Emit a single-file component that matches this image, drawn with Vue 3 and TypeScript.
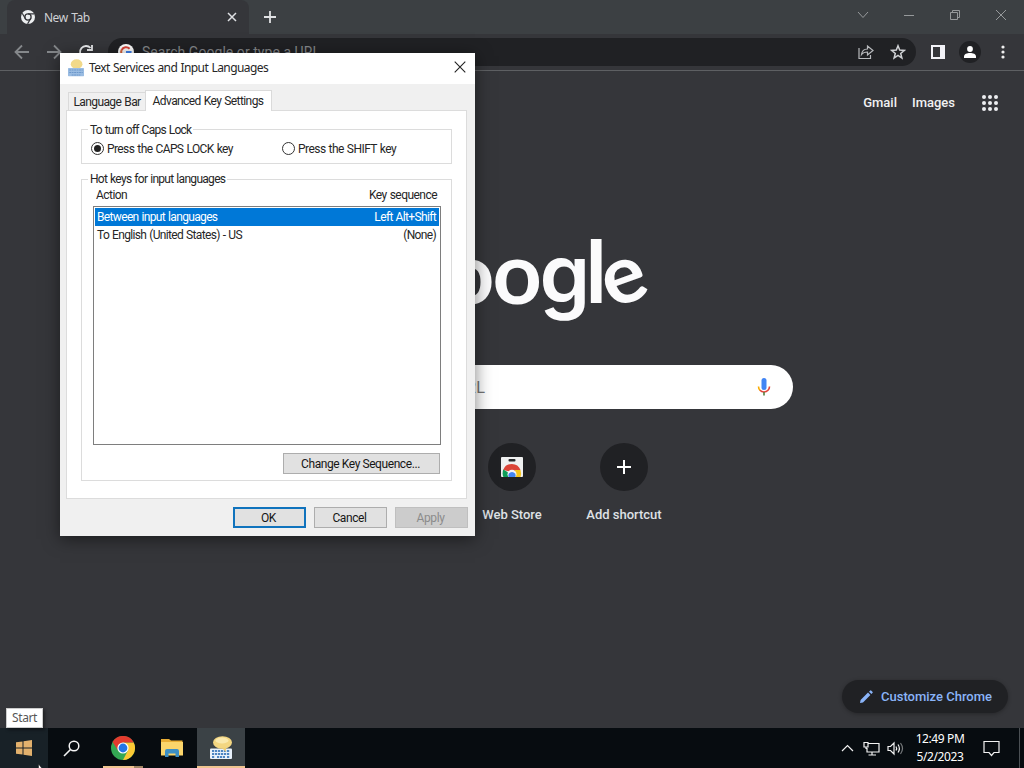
<script setup lang="ts">
import { ref } from 'vue'

interface HotKey {
  action: string
  keys: string
}

const hotKeys: HotKey[] = [
  { action: 'Between input languages', keys: 'Left Alt+Shift' },
  { action: 'To English (United States) - US', keys: '(None)' },
]
const selected = ref(0)
const capsMode = ref<'caps' | 'shift'>('caps')
const dots = [0, 1, 2, 3, 4, 5, 6, 7, 8]
</script>

<template>
  <div class="desktop">
    <div class="browser">
      <header class="tabstrip">
        <div class="tab">
          <svg class="tab-icon" width="14" height="14" viewBox="0 0 14 14">
            <circle cx="7" cy="7" r="7" fill="#eceef0" />
            <circle cx="7" cy="7" r="3.1" fill="none" stroke="#35363a" stroke-width="1.3" />
            <path d="M7 3.9H13.4M4.3 8.5L1.2 3.2M9.7 8.5L6.6 13.9" stroke="#35363a" stroke-width="1.2" />
          </svg>
          <span class="tab-title">New Tab</span>
          <svg class="tab-close" width="10" height="10" viewBox="0 0 10 10"><path d="M1 1l8 8M9 1L1 9" stroke="#dfe1e4" stroke-width="1.5" /></svg>
        </div>
        <svg class="new-tab" width="12" height="12" viewBox="0 0 12 12"><path d="M6 0v12M0 6h12" stroke="#e0e2e4" stroke-width="1.8" /></svg>
        <div class="win-controls">
          <svg width="12" height="12" viewBox="0 0 12 12"><path d="M1 3l5 5.5L11 3" /></svg>
          <svg width="12" height="12" viewBox="0 0 12 12"><path d="M1 6.5h10" /></svg>
          <svg width="12" height="12" viewBox="0 0 12 12"><path d="M1.5 3.5h7v7h-7zM3.5 3.500v-2h7v7h-2" /></svg>
          <svg width="12" height="12" viewBox="0 0 12 12"><path d="M1 1l10 10M11 1L1 11" /></svg>
        </div>
      </header>
      <div class="toolbar">
        <svg class="nav" width="16" height="16" viewBox="0 0 16 16"><path d="M15 8H2M8 1.500L1.500 8L8 14.500" stroke="#85888b" /></svg>
        <svg class="nav" width="16" height="16" viewBox="0 0 16 16"><path d="M1 8h13M8 1.500L14.500 8L8 14.500" stroke="#85888b" /></svg>
        <svg class="nav" width="16" height="16" viewBox="0 0 16 16"><path d="M13.500 10.500A6 6 0 1 1 12.500 4M14 1v5H9" stroke="#eceef0" /></svg>
        <div class="omnibox">
          <svg class="g-icon" width="16" height="16" viewBox="0 0 16 16">
            <circle cx="8" cy="8" r="8" fill="#fff" />
            <path d="M3.700 6A4.800 4.800 0 0 1 11.600 4.700" fill="none" stroke="#d9453a" stroke-width="2" />
            <path d="M3.600 6a4.800 4.800 0 0 0 0 4" fill="none" stroke="#e0653a" stroke-width="2" />
            <path d="M3.700 10a4.800 4.800 0 0 0 7.600 1.500" fill="none" stroke="#34a853" stroke-width="2" />
            <path d="M8 8h4.600a4.800 4.800 0 0 1-1.300 3.500" fill="none" stroke="#4285f4" stroke-width="2" />
          </svg>
          <span class="omni-text">Search Google or type a URL</span>
          <svg class="share" width="16" height="16" viewBox="0 0 16 16"><path d="M1 4v10.500h11.500V11M3.500 10.500C4 6.500 6 5 9.500 5V2L15 6.500L9.500 11V8C7 8 5 8.500 3.500 10.500z" fill="none" stroke="#b8babd" stroke-width="1.2" /></svg>
          <svg width="16" height="16" viewBox="0 0 16 16"><path d="M8 1.800l1.700 4.300 4.600.3-3.600 3 1.200 4.600L8 11.400 4.100 14l1.200-4.600-3.600-3 4.600-.3z" fill="none" stroke="#d0d2d5" stroke-width="1.500" /></svg>
        </div>
        <svg class="side" width="14" height="14" viewBox="0 0 14 14"><path d="M0 0h14v14H0zM2 2v10h7V2z" fill="#f3f3f8" fill-rule="evenodd" /></svg>
        <div class="avatar">
          <svg width="12" height="12" viewBox="0 0 12 12"><circle cx="6" cy="3" r="2.900" fill="#fff" /><path d="M0 12V10.500C0 8 3 7 6 7s6 1 6 3.500V12z" fill="#fff" /></svg>
        </div>
        <svg class="kebab" width="4" height="14" viewBox="0 0 4 14"><circle cx="2" cy="2" r="1.600" /><circle cx="2" cy="7" r="1.600" /><circle cx="2" cy="12" r="1.600" /></svg>
      </div>

      <main class="ntp">
        <nav class="ntp-nav">
          <span class="gmail">Gmail</span>
          <span class="images">Images</span>
          <div class="apps"><i v-for="d in dots" :key="d"></i></div>
        </nav>
        <svg class="wordmark" width="290" height="100" viewBox="370 230 290 100">
          <text y="303.500" x="374">G</text>
          <text y="303.500" x="445">o</text>
          <text y="303.500" x="492.500">o</text>
          <text class="g" y="303" x="539.500">g</text>
          <text y="303" x="585.500">l</text>
          <text class="e" y="302.500" x="603" transform="rotate(-20 625.500 282)">e</text>
        </svg>
        <div class="searchbox">
          <span class="search-text">Search Google or type a URL</span>
          <svg width="14" height="20" viewBox="0 0 14 20">
            <rect x="4.500" y="1" width="5" height="12" rx="2.500" fill="#4285f4" />
            <path d="M1.500 9.500c0 2 .8 3.200 1.700 4" fill="none" stroke="#f9ab00" stroke-width="1.600" />
            <path d="M3 13.300c2 2.200 6 2.200 8 0 .9-.9 1.500-2 1.500-3.800" fill="none" stroke="#e0453a" stroke-width="1.600" />
            <path d="M7 15v3.500" stroke="#56803f" stroke-width="1.600" />
          </svg>
        </div>
        <div class="shortcuts">
          <div class="shortcut">
            <div class="disc">
              <svg width="22" height="20" viewBox="0 0 22 20">
                <rect width="22" height="20" rx="1" fill="#eff0f0" />
                <rect x="7.500" y="2" width="7" height="2.500" rx="1" fill="#25282a" />
                <path d="M2.200 13A9.200 9.200 0 0 1 19.500 13L11 15z" fill="#db4437" />
                <path d="M2.200 12.500Q1 17 2.400 20H10L6.500 15z" fill="#0f9d58" />
                <path d="M14 13h5.500q1.200 4 0 7H11z" fill="#f6c51c" />
                <circle cx="11" cy="17.200" r="4.500" fill="#f3f5f8" />
                <path d="M7.700 20a3.600 3.600 0 1 1 6.600 0z" fill="#4285f4" />
              </svg>
            </div>
            <span class="ws-label">Web Store</span>
          </div>
          <div class="shortcut">
            <div class="disc">
              <svg width="14" height="14" viewBox="0 0 14 14"><path d="M7 0v14M0 7h14" stroke="#fff" stroke-width="2" /></svg>
            </div>
            <span>Add shortcut</span>
          </div>
        </div>
        <div class="customize">
          <svg width="14" height="14" viewBox="0 0 14 14"><path d="M1 13l.6-3L9 2.600l2.400 2.400L4 12.400zM10 1.700l1-1a1 1 0 0 1 1.400 0l1 1a1 1 0 0 1 0 1.400l-1 1z" fill="#8ab4f8" /></svg>
          <span>Customize Chrome</span>
        </div>
      </main>
    </div>

    <section class="dialog">
      <div class="titlebar">
        <svg width="16" height="18" viewBox="0 0 26 26" preserveAspectRatio="none">
          <ellipse cx="14" cy="7.500" rx="9.500" ry="7" fill="#f1d98a" />
          <path d="M13 13l3 5 3-5z" fill="#f1d98a" />
          <rect x="0" y="13" width="26" height="12" rx="1" fill="#9abce2" />
          <path d="M2 16h22M2 19.500h22M6 23h14" stroke="#6d98cb" stroke-width="1.500" stroke-dasharray="3 1" />
        </svg>
        <h1>Text Services and Input Languages</h1>
        <svg class="dlg-close" width="12" height="12" viewBox="0 0 12 12"><path d="M.7.7l10.600 10.600M11.300.7L.7 11.300" stroke="#222" stroke-width="1.100" /></svg>
      </div>
      <div class="tabs">
        <div class="dtab"><span>Language Bar</span></div>
        <div class="dtab active"><span>Advanced Key Settings</span></div>
      </div>
      <div class="panel">
        <div class="group caps">
          <span class="legend l1">To turn off Caps Lock</span>
          <label class="radio" @click="capsMode = 'caps'"><i :class="{ on: capsMode === 'caps' }"></i><span class="r1">Press the CAPS LOCK key</span></label>
          <label class="radio" @click="capsMode = 'shift'"><i :class="{ on: capsMode === 'shift' }"></i><span class="r2">Press the SHIFT key</span></label>
        </div>
        <div class="group keys">
          <span class="legend l2">Hot keys for input languages</span>
          <div class="cols"><span>Action</span><span>Key sequence</span></div>
          <div class="list">
            <div v-for="(k, n) in hotKeys" :key="k.action" class="row" :class="{ sel: n === selected }" @click="selected = n">
              <span>{{ k.action }}</span><span>{{ k.keys }}</span>
            </div>
          </div>
          <button class="btn change">Change Key Sequence...</button>
        </div>
      </div>
      <div class="footer">
        <button class="btn primary">OK</button>
        <button class="btn">Cancel</button>
        <button class="btn off">Apply</button>
      </div>
    </section>

    <footer class="taskbar">
      <div class="task start">
        <svg width="16" height="16" viewBox="0 0 16 16"><path d="M0 2.300l6.500-.9v6.100H0zM7.500 1.200L16 0v7.500H7.500zM0 8.500h6.500v6.100L0 13.700zM7.500 8.500H16V16l-8.500-1.200z" fill="#e3b16d" /></svg>
      </div>
      <div class="task find">
        <svg width="17" height="17" viewBox="0 0 17 17"><circle cx="11" cy="6" r="4.800" fill="none" stroke="#f4f4f4" stroke-width="1.500" /><path d="M7.500 9.500L1 16" stroke="#f4f4f4" stroke-width="1.600" /></svg>
      </div>
      <div class="task run chrome-task">
        <svg width="24" height="24" viewBox="0 0 24 24">
          <circle cx="12" cy="12" r="12" fill="#34a853" />
          <path d="M12 6.500h10.700A12 12 0 0 1 12 24L16.800 14.700z" fill="#fcc934" />
          <path d="M1.600 6l5.600 8.700L12 6.500 22.700 6.500A12 12 0 0 0 1.600 6z" fill="#e33b2e" />
          <circle cx="12" cy="12" r="5.600" fill="#fff" />
          <circle cx="12" cy="12" r="4.400" fill="#2476e5" />
        </svg>
      </div>
      <div class="task folder">
        <svg width="22" height="20" viewBox="0 0 22 20">
          <path d="M0 1h8l2 1.500h11.500V15H0z" fill="#e9ae35" />
          <path d="M0 4h22v13.500H0z" fill="#fbd56b" />
          <path d="M4 19v-6q0-2 2-2h10q2 0 2 2v6h-3.500v-3.500h-7V19z" fill="#3d8fc4" />
        </svg>
      </div>
      <div class="task run lit">
        <svg width="24" height="24" viewBox="0 0 24 24">
          <rect x="1" y="12.500" width="22" height="10.500" rx="1" fill="#e8f1fa" />
          <path d="M3 15h18M3 18h18M3 21h3m2 0h8m2 0h3" stroke="#4e86c2" stroke-width="1.800" stroke-dasharray="2.200 .8" />
          <ellipse cx="13.500" cy="6.500" rx="9.500" ry="6.300" fill="#f3d681" />
          <ellipse cx="13" cy="4.500" rx="6.500" ry="3" fill="#fae9ad" />
          <path d="M13 12l4 4v-4.500z" fill="#f0cf75" />
        </svg>
      </div>
      <div class="tray">
        <svg class="chevron" width="13" height="8" viewBox="0 0 13 8"><path d="M1 7l5.500-5.500L12 7" /></svg>
        <svg class="net" width="17" height="15" viewBox="0 0 17 15"><path d="M5 2.500h11v8.500H4V7M9 11v3M5.500 14H13M1 1.500h4V6H1zM3 6v2" /></svg>
        <svg width="17" height="15" viewBox="0 0 17 15"><path d="M1 5.500h2.500L7 2v11L3.500 9.500H1zM9 5.500q1.300 2 0 4M11 3.500q2.800 4 0 8" /><path d="M13.500 2q4 5.500 0 11" stroke="#777a7c" /></svg>
        <div class="clock"><span>12:49 PM</span><span>5/2/2023</span></div>
        <svg width="17" height="17" viewBox="0 0 17 17"><path d="M1 1.500h15v11h-5l-2.500 3-2.500-3H1z" /></svg>
      </div>
      <i class="peek"></i>
    </footer>
    <div class="tooltip">Start</div>
    <svg class="cursor" width="8" height="5" viewBox="0 0 8 5"><path d="M.5 0v5h4z" fill="#fff" stroke="#111" stroke-width=".5" /></svg>
  </div>
</template>

<style>
html,
body {
  margin: 0;
  overflow: hidden;
}
</style>

<style scoped>
* {
  box-sizing: border-box;
}
svg {
  display: block;
  flex: none;
}
span {
  white-space: nowrap;
}
.desktop {
  position: relative;
  width: 1024px;
  height: 768px;
  overflow: hidden;
  font-family: Roboto, 'Liberation Sans', sans-serif;
  background: #35363a;
}
.browser {
  height: 728px;
  display: flex;
  flex-direction: column;
}
.tabstrip {
  height: 34px;
  background: #3c4043;
  display: flex;
  align-items: center;
  padding-left: 7px;
}
.tab {
  width: 242px;
  height: 34px;
  background: #35363a;
  border-radius: 8px 8px 0 0;
  display: flex;
  align-items: center;
  padding: 0 12px 0 14px;
}
.tab-title {
  flex: 1;
  margin-left: 9px;
  font: 12px 'Noto Sans', sans-serif;
  letter-spacing: -0.5px;
  word-spacing: 1px;
  color: #cfd1d4;
}
.new-tab {
  margin-left: 15px;
}
.win-controls {
  margin: -5px 17px 0 auto;
  display: flex;
  gap: 34px;
  fill: none;
  stroke: #96999b;
}
.toolbar {
  height: 37px;
  border-bottom: 1px solid #5e6063;
  display: flex;
  align-items: center;
  padding-left: 14px;
}
.nav {
  margin-right: 16px;
  fill: none;
  stroke-width: 1.8;
}
.omnibox {
  width: 808px;
  height: 28px;
  margin-left: -2px;
  border-radius: 14px;
  background: #202124;
  display: flex;
  align-items: center;
  padding: 0 10px 0 10px;
}
.omni-text {
  flex: 1;
  margin-left: 8px;
  font-size: 14px;
  letter-spacing: 0.05px;
  color: #85888b;
}
.share {
  margin-right: 16px;
}
.side {
  margin-left: 15px;
}
.avatar {
  width: 22px;
  height: 22px;
  margin-left: 14px;
  border-radius: 50%;
  background: #202124;
  display: grid;
  place-items: center;
}
.kebab {
  margin-left: 20px;
  fill: #f0f0f0;
}
.ntp {
  flex: 1;
  display: flex;
  flex-direction: column;
  align-items: center;
}
.ntp-nav {
  align-self: stretch;
  height: 64px;
  display: flex;
  align-items: center;
  justify-content: flex-end;
  padding-right: 26px;
  font: 500 13px Roboto, sans-serif;
  color: #f1f1f2;
}
.ntp-nav span {
  padding-bottom: 2px;
}
.images {
  margin: 0 27px 0 15px;
}
.apps {
  display: grid;
  grid-template-columns: repeat(3, 4px);
  gap: 2px;
}
.apps i {
  width: 4px;
  height: 4px;
  border-radius: 50%;
  background: #eceef0;
}
.wordmark {
  margin: 95px 0 0 6px;
  font: 700 86px Lato, sans-serif;
  fill: #fbfbfc;
}
.wordmark .g {
  font: 600 81px Inter, sans-serif;
}
.wordmark .e {
  font-size: 82px;
}
.searchbox {
  width: 561px;
  height: 44px;
  margin-top: 35px;
  border-radius: 22px;
  background: #fff;
  display: flex;
  align-items: center;
  justify-content: space-between;
  padding: 0 22px 0 45px;
}
.search-text {
  padding-top: 2px;
  font: 16px 'Liberation Sans', sans-serif;
  letter-spacing: -0.05px;
  color: #757575;
}
.shortcuts {
  width: 336px;
  margin-top: 34px;
  display: flex;
  justify-content: flex-end;
}
.shortcut {
  width: 112px;
  display: flex;
  flex-direction: column;
  align-items: center;
  gap: 16px;
  font: 500 13px/16px Roboto, sans-serif;
  color: #dfe1e5;
}
.disc {
  width: 48px;
  height: 48px;
  border-radius: 50%;
  background: #202124;
  display: grid;
  place-items: center;
}
.customize {
  margin: auto 16px 15px auto;
  width: 166px;
  height: 33px;
  border-radius: 17px;
  background: #202124;
  display: flex;
  align-items: center;
  gap: 8px;
  padding-left: 17px;
  font: 500 13px Roboto, sans-serif;
  color: #8ab4f8;
  box-shadow: 0 1px 4px rgba(0, 0, 0, 0.3);
}
.dialog {
  position: absolute;
  left: 60px;
  top: 53px;
  width: 415px;
  height: 483px;
  background: #f0f0f0;
  box-shadow: 0 3px 16px rgba(0, 0, 0, 0.5);
  color: #262626;
  font-size: 12px;
  letter-spacing: -0.59px;
  word-spacing: 0.6px;
}
.titlebar {
  height: 31px;
  background: #fff;
  display: flex;
  align-items: center;
  padding: 0 9px 2px 8px;
}
.titlebar h1 {
  flex: 1;
  margin: 0 0 0 5px;
  font: 12px 'Noto Sans', sans-serif;
  letter-spacing: -0.56px;
}
.dlg-close {
  margin-top: -1px;
}
.tabs {
  height: 26px;
  display: flex;
  align-items: flex-end;
  padding-left: 8px;
}
.dtab {
  width: 77px;
  height: 18px;
  border: 1px solid #dadada;
  border-width: 1px 0 0 1px;
  display: flex;
  align-items: center;
  justify-content: center;
}
.dtab.active {
  width: 127px;
  height: 21px;
  border-right-width: 1px;
  background: #fff;
  position: relative;
  top: 1px;
  z-index: 1;
  padding: 0 1px 1px 0;
}
.panel {
  margin: 0 8px 0 6px;
  height: 389px;
  padding: 18px 14px;
  border: 1px solid #dcdcdc;
  background: #fff;
}
.group {
  position: relative;
  width: 371px;
  border: 1px solid #dcdcdc;
}
.legend {
  position: absolute;
  left: 6px;
  top: -7px;
  padding: 0 2px;
  line-height: 14px;
  background: #fff;
}
.l1 {
  letter-spacing: -0.75px;
}
.l2 {
  top: -8px;
  letter-spacing: -0.7px;
}
.r2 {
  letter-spacing: -0.55px;
}
.caps {
  height: 35px;
  display: flex;
  align-items: center;
  padding: 4px 0 0 9px;
}
.radio {
  flex: none;
  width: 191px;
  display: flex;
  align-items: center;
  gap: 3px;
}
.radio i {
  width: 13px;
  height: 13px;
  border: 1px solid #333;
  border-radius: 50%;
  display: grid;
  place-items: center;
}
.radio .on::after {
  content: '';
  width: 7px;
  height: 7px;
  border-radius: 50%;
  background: #222;
}
.keys {
  height: 302px;
  margin-top: 15px;
  padding: 8px 10px 8px 11px;
}
.cols {
  height: 18px;
  line-height: 15px;
  display: flex;
  justify-content: space-between;
  padding: 0 4px 0 3px;
  letter-spacing: -0.54px;
}
.list {
  height: 239px;
  border: 1px solid #7e7e7e;
  padding: 1px;
}
.row {
  height: 18px;
  line-height: 18px;
  display: flex;
  justify-content: space-between;
  padding: 0 3px 0 2px;
  letter-spacing: -0.65px;
}
.row.sel {
  background: #0078d7;
  color: #fff;
}
.btn {
  width: 73px;
  height: 21px;
  padding: 0 2px 0 0;
  border: 1px solid #adadad;
  border-radius: 0;
  background: #e1e1e1;
  font: inherit;
  letter-spacing: -0.42px;
  color: #161616;
}
.change {
  display: block;
  width: 157px;
  margin: 8px 1px 0 auto;
}
.primary {
  border: 2px solid #1073bd;
}
.off {
  background: #ccc;
  border-color: #bfbfbf;
  color: #8b8b8b;
}
.footer {
  display: flex;
  justify-content: flex-end;
  gap: 8px;
  padding: 8px 7px;
}
.taskbar {
  height: 40px;
  background: #070c10;
  display: flex;
}
.task {
  width: 49px;
  display: grid;
  place-items: center;
}
.start {
  width: 48px;
  background: #182127;
}
.find {
  padding-right: 2px;
}
.folder {
  padding-left: 2px;
}
.run {
  position: relative;
}
.chrome-task {
  padding-left: 2px;
}
.run::after {
  content: '';
  position: absolute;
  left: 6px;
  right: 3px;
  bottom: 0;
  height: 2px;
  background: #efc48f;
}
.chrome-task::after {
  background: linear-gradient(90deg, #efc48f 31px, #a08563 31px);
}
.lit {
  width: 48px;
  margin-left: 2px;
  background: #3b4246;
}
.lit::after {
  left: 0;
  right: 0;
}
.tray {
  margin-left: auto;
  display: flex;
  align-items: center;
  fill: none;
  stroke: #f2f2f2;
  stroke-width: 1.2;
}
.tray svg {
  margin-right: 0;
}
.tray .chevron {
  margin-right: 9px;
}
.tray .net {
  margin-right: 7px;
}
.clock {
  width: 60px;
  margin: 0 13px 0 6px;
  display: flex;
  flex-direction: column;
  align-items: center;
  font: 12px/18px 'Noto Sans', sans-serif;
  letter-spacing: -0.4px;
  color: #fff;
}
.peek {
  width: 1px;
  margin: 0 4px 0 19px;
  background: #4b5054;
}
.tooltip {
  position: absolute;
  left: 6px;
  top: 708px;
  width: 37px;
  height: 20px;
  background: #fff;
  border: 1px solid #ccc;
  text-align: center;
  font: 12px/18px 'Noto Sans', sans-serif;
  letter-spacing: -0.4px;
  color: #575757;
  box-shadow: 2px 2px 3px rgba(0, 0, 0, 0.4);
}
.cursor {
  position: absolute;
  left: 38px;
  top: 764px;
}
</style>
